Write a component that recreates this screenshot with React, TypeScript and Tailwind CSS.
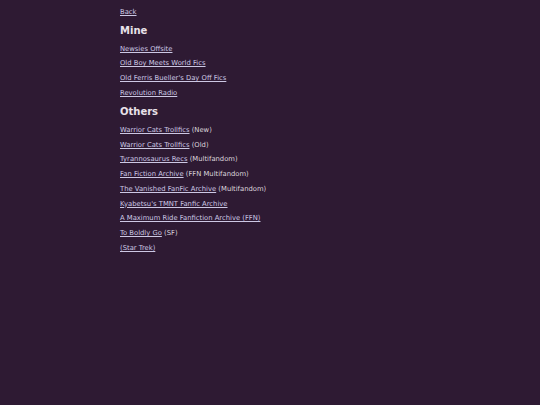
import React from "react";

const mine = [
  "Newsies Offsite",
  "Old Boy Meets World Fics",
  "Old Ferris Bueller's Day Off Fics",
  "Revolution Radio",
];

const others: [string, string][] = [
  ["Warrior Cats Trollfics", "(New)"],
  ["Warrior Cats Trollfics", "(Old)"],
  ["Tyrannosaurus Recs", "(Multifandom)"],
  ["Fan Fiction Archive", "(FFN Multifandom)"],
  ["The Vanished FanFic Archive", "(Multifandom)"],
  ["Kyabetsu's TMNT Fanfic Archive", ""],
  ["A Maximum Ride Fanfiction Archive (FFN)", ""],
  ["To Boldly Go", "(SF)"],
  ["(Star Trek)", ""],
];

export default function App() {
  return (
    <div
      className="min-h-[405px] w-full bg-[#2e1a33] text-[#ddd6dd]"
      style={{ fontFamily: '"DejaVu Sans", Verdana, sans-serif' }}
    >
      <div className="mx-auto w-[300px] pt-[5px] text-[6.8px] leading-[9px]">
        <div className="py-[3px]">
          <a href="#" className="text-[#cdc8e4] underline">Back</a>
        </div>
        <h2 className="mt-[5px] mb-[7.5px] text-[10px] leading-[12px] font-bold text-[#e9e2ea]">Mine</h2>
        <div className="flex flex-col gap-[5.75px]">
          {mine.map((m) => (
            <div key={m}>
              <a href="#" className="text-[#cdc8e4] underline">{m}</a>
            </div>
          ))}
        </div>
        <h2 className="mt-[8.5px] mb-[7.5px] text-[10px] leading-[12px] font-bold text-[#e9e2ea]">Others</h2>
        <div className="flex flex-col gap-[5.75px]">
          {others.map(([l, t], i) => (
            <div key={i}>
              <a href="#" className="text-[#cdc8e4] underline">{l}</a>
              {t && <span> {t}</span>}
            </div>
          ))}
        </div>
      </div>
    </div>
  );
}
